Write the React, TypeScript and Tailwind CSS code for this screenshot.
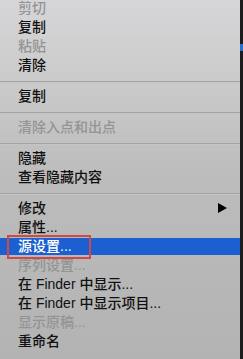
import React from 'react';

type Item =
  | { kind: 'sep' }
  | { kind: 'item'; label: string; disabled?: boolean; submenu?: boolean; active?: boolean };

const items: Item[] = [
  { kind: 'item', label: '剪切', disabled: true },
  { kind: 'item', label: '复制' },
  { kind: 'item', label: '粘贴', disabled: true },
  { kind: 'item', label: '清除' },
  { kind: 'sep' },
  { kind: 'item', label: '复制' },
  { kind: 'sep' },
  { kind: 'item', label: '清除入点和出点', disabled: true },
  { kind: 'sep' },
  { kind: 'item', label: '隐藏' },
  { kind: 'item', label: '查看隐藏内容' },
  { kind: 'sep' },
  { kind: 'item', label: '修改', submenu: true },
  { kind: 'item', label: '属性...' },
  { kind: 'item', label: '源设置...', active: true },
  { kind: 'item', label: '序列设置...', disabled: true },
  { kind: 'item', label: '在 Finder 中显示...' },
  { kind: 'item', label: '在 Finder 中显示项目...' },
  { kind: 'item', label: '显示原稿...', disabled: true },
  { kind: 'item', label: '重命名' },
];

function Row({ item }: { item: Extract<Item, { kind: 'item' }> }) {
  if (item.active) {
    return (
      <div className="relative h-[19px] py-[1px]">
        <div className="flex h-[17px] items-center bg-[#1c5fd0] pl-[18px] text-white">
          {item.label}
        </div>
        {/* red annotation box */}
        <div className="absolute left-[7px] top-[-1.5px] h-[24px] w-[84px] border-2 border-[#cf4a45]" />
      </div>
    );
  }
  return (
    <div
      className={`flex h-[19px] items-center justify-between pl-[18px] pr-[13px] ${
        item.disabled ? 'text-[#949494]' : 'text-[#111111]'
      }`}
    >
      <span>{item.label}</span>
      {item.submenu && (
        <svg width="9" height="10" viewBox="0 0 9 10">
          <path d="M0 0 L9 5 L0 10 Z" fill="#000" />
        </svg>
      )}
    </div>
  );
}

export default function App() {
  return (
    <div className="flex h-[359px] w-[243px] overflow-hidden">
      <div
        className="h-full w-[240px] overflow-hidden bg-gradient-to-b from-[#d6d6d8] via-[#bcbcbc] to-[#b3b3b3] text-[14px] font-medium leading-[19px]"
        style={{ fontFamily: '"Liberation Sans", "Noto Sans CJK SC", sans-serif' }}
      >
        <div className="-mt-[1.5px]">
          {items.map((item, i) =>
            item.kind === 'sep' ? (
              <div key={i} className="flex h-[12px] flex-col justify-start pt-[6px]">
                <div className="h-[1px] bg-[#a4a4a4]" />
                <div className="h-[1px] bg-[#c4c4c4]" />
              </div>
            ) : (
              <Row key={i} item={item} />
            )
          )}
        </div>
      </div>
      <div className="flex h-full flex-1 flex-col bg-[#1d1d1d]">
        <div className="mt-[44px] h-[7px] bg-[#2a6fc9]" />
      </div>
    </div>
  );
}
